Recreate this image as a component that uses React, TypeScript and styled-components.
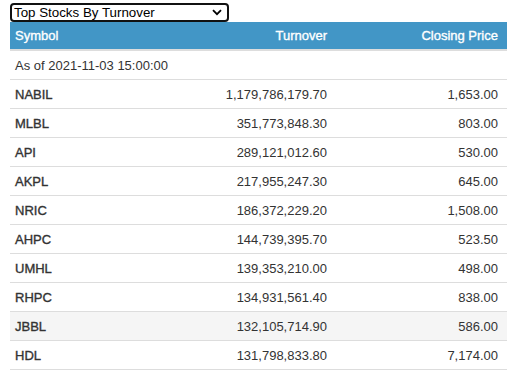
import React from "react";
import styled, { createGlobalStyle } from "styled-components";

const Global = createGlobalStyle`
  html, body { margin: 0; padding: 0; background: #fff; }
  body { font-family: "Liberation Sans", Arial, sans-serif; color: #333; }
`;

const Page = styled.div`
  padding: 3px 3px 0 10px;
  display: flex;
  flex-direction: column;
  align-items: flex-start;
`;

const SelectWrap = styled.div`
  position: relative;
  width: 219px;
  height: 19px;
`;

const Select = styled.select`
  appearance: none;
  -webkit-appearance: none;
  width: 219px;
  height: 19px;
  box-sizing: border-box;
  border: 2px solid #111;
  border-radius: 4px;
  padding: 0 0 0 2px;
  margin: 0;
  font-family: "Liberation Sans", Arial, sans-serif;
  font-size: 13.33px;
  color: #000;
  background: #fff;
  outline: none;
  line-height: 15px;
`;

const Chevron = styled.svg`
  position: absolute;
  right: 7px;
  top: 6px;
  pointer-events: none;
`;

const Table = styled.table`
  width: 497px;
  border-collapse: collapse;
  table-layout: fixed;
  font-size: 13px;
`;

const Th = styled.th<{ $align?: "left" | "right" }>`
  background: #4296c6;
  color: #fff;
  font-weight: normal;
  -webkit-text-stroke: 0.35px #fff;
  height: 28px;
  padding: 0 9px 0 5px;
  text-align: ${(p) => p.$align ?? "left"};
  border-bottom: 2px solid #ddd;
  box-sizing: border-box;
`;

const Row = styled.tr<{ $hover?: boolean }>`
  background: ${(p) => (p.$hover ? "#f5f5f5" : "#fff")};
`;

const Td = styled.td<{ $align?: "left" | "right"; $strong?: boolean }>`
  height: 28px;
  padding: 0 9px 0 5px;
  text-align: ${(p) => p.$align ?? "left"};
  font-weight: normal;
  -webkit-text-stroke: ${(p) => (p.$strong ? "0.35px #333" : "0")};
  border-top: 1px solid #ddd;
  border-bottom: 1px solid #ddd;
  color: #333;
`;

const AsOf = styled.td`
  height: 28px;
  padding: 0 5px;
  color: #333;
`;

const data: [string, string, string][] = [
  ["NABIL", "1,179,786,179.70", "1,653.00"],
  ["MLBL", "351,773,848.30", "803.00"],
  ["API", "289,121,012.60", "530.00"],
  ["AKPL", "217,955,247.30", "645.00"],
  ["NRIC", "186,372,229.20", "1,508.00"],
  ["AHPC", "144,739,395.70", "523.50"],
  ["UMHL", "139,353,210.00", "498.00"],
  ["RHPC", "134,931,561.40", "838.00"],
  ["JBBL", "132,105,714.90", "586.00"],
  ["HDL", "131,798,833.80", "7,174.00"],
];

export default function App() {
  return (
    <>
      <Global />
      <Page>
        <SelectWrap>
          <Select defaultValue="turnover">
            <option value="turnover">Top Stocks By Turnover</option>
            <option value="gainers">Top Gainers</option>
            <option value="losers">Top Losers</option>
          </Select>
          <Chevron width="10" height="7" viewBox="0 0 10 7">
            <path d="M1 1.2 L5 5.2 L9 1.2" fill="none" stroke="#000" strokeWidth="1.8" />
          </Chevron>
        </SelectWrap>
        <Table>
          <colgroup>
            <col style={{ width: 155 }} />
            <col style={{ width: 171 }} />
            <col style={{ width: 171 }} />
          </colgroup>
          <thead>
            <tr>
              <Th>Symbol</Th>
              <Th $align="right">Turnover</Th>
              <Th $align="right">Closing Price</Th>
            </tr>
          </thead>
          <tbody>
            <tr>
              <AsOf colSpan={3}>As of 2021-11-03 15:00:00</AsOf>
            </tr>
            {data.map(([sym, turn, close]) => (
              <Row key={sym} $hover={sym === "JBBL"}>
                <Td $strong>{sym}</Td>
                <Td $align="right">{turn}</Td>
                <Td $align="right">{close}</Td>
              </Row>
            ))}
          </tbody>
        </Table>
      </Page>
    </>
  );
}
